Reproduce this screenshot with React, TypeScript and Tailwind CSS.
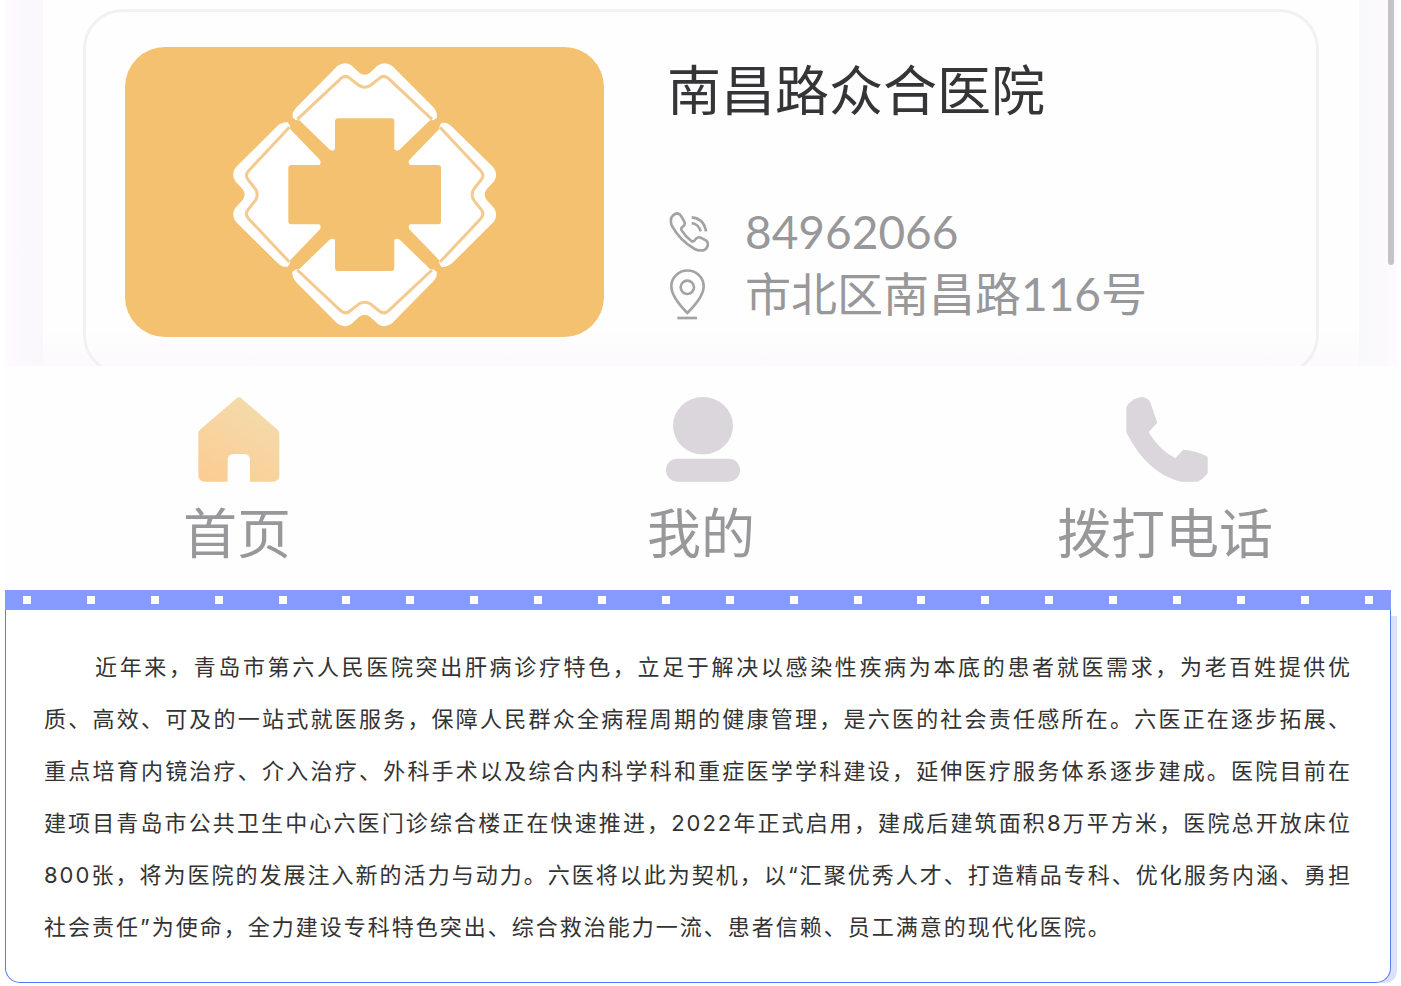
import type { ReactNode } from 'react'

const PETAL =
  'M218 190 Q222 180 230 172 L352 48 Q374 32 394 46 L418 68 Q434 80 450 68 L474 46 Q496 32 517 48 L640 172 Q652 185 651 203 Q642 212 630 211 L540 298 Q531 306 523 298 V214 Q523 205 514 205 H354 Q345 205 345 214 V298 Q337 306 328 298 L238 211 Q226 212 218 203 Z'
const PETAL_LINE = 'M232 208 L362 86 Q376 73 390 85 L418 107 Q434 116 450 107 L478 85 Q492 73 506 86 L636 208'

function Emblem() {
  return (
    <svg viewBox="0 -9 870 870" className="size-[290px]" aria-hidden="true">
      {[0, 90, 180, 270].map((angle) => (
        <g key={angle} transform={`rotate(${angle} 434 434)`}>
          <path d={PETAL} fill="#fff" />
          <path d={PETAL_LINE} fill="none" stroke="#f4ca90" strokeWidth="9" />
        </g>
      ))}
    </svg>
  )
}

function CallIcon() {
  return (
    <svg viewBox="21 36 126 126" className="size-[42px] shrink-0" fill="none" stroke="#a3a3a4" strokeWidth="8" strokeLinejoin="round" aria-hidden="true">
      <path d="M34 56 Q42 43 53 43 Q60 44 64 52 L73 68 Q77 77 69 82 Q61 87 65 94 Q76 112 94 126 Q101 130 106 121 Q113 112 122 116 L139 125 Q145 130 143 140 Q138 153 128 154 Q115 156 104 150 Q59 124 35 79 Q31 68 34 56 Z" />
      <path d="M95 55 Q132 58 138 97 M95 72 Q116 75 122 97" />
    </svg>
  )
}

function PinIcon() {
  return (
    <svg viewBox="21 210 126 159" className="h-[53px] w-[42px] shrink-0" fill="none" stroke="#a3a3a4" strokeWidth="8" strokeLinejoin="round" aria-hidden="true">
      <path d="M82 345 Q34 297 34 265 A48 47 0 0 1 131 265 Q131 297 82 345 Z" />
      <circle cx="82" cy="268" r="20" />
      <path d="M52 360 H111" />
    </svg>
  )
}

function HomeIcon() {
  return (
    <svg viewBox="66 51 270 255" className="h-[85px] w-[90px]" aria-hidden="true">
      <defs>
        <linearGradient id="home" x1="0.8" y1="0" x2="0.2" y2="1">
          <stop offset="0" stopColor="#f3dcae" />
          <stop offset="1" stopColor="#fbcd93" />
        </linearGradient>
      </defs>
      <path fill="url(#home)" d="M200 55 Q207 49 214 55 L323 149 Q328 154 328 160 V285 Q328 305 308 305 H240 V240 Q240 222 222 222 H191 Q173 222 173 240 V305 H105 Q85 305 85 285 V160 Q85 154 90 149 Z" />
    </svg>
  )
}

function UserIcon() {
  return (
    <svg viewBox="48 51 270 255" className="h-[85px] w-[90px]" fill="#dad6db" aria-hidden="true">
      <ellipse cx="189" cy="137" rx="90" ry="86" />
      <rect x="78" y="236" width="222" height="69" rx="34" />
    </svg>
  )
}

function PhoneIcon() {
  return (
    <svg viewBox="210 51 270 255" className="h-[85px] w-[90px]" fill="#dad6db" aria-hidden="true">
      <path d="M229 81 Q248 51 278 51 Q295 53 302 70 L322 128 L296 156 Q325 208 376 235 L400 209 Q440 212 473 230 V280 Q457 300 442 305 H392 Q290 280 229 157 Z" />
    </svg>
  )
}

function Tab({ icon, label }: { icon: ReactNode; label: string }) {
  return (
    <button type="button" className="flex flex-col items-center gap-[22px] text-[54px] leading-[60px] text-[#98989a]">
      {icon}
      <span>{label}</span>
    </button>
  )
}

function HospitalCard() {
  return (
    <article className="mx-10 mt-[9px] -mb-[9px] flex gap-[63px] rounded-[40px] border-[3px] border-[#f1f1f2] px-[39px] py-[35px]">
      <div className="flex w-[479px] shrink-0 items-center justify-center rounded-[40px] bg-[#f3c16f]">
        <Emblem />
      </div>
      <div className="flex flex-col justify-between text-[46px] leading-[62px] text-[#98989a]">
        <h2 className="text-[54px] leading-[88px] text-[#353537]">南昌路众合医院</h2>
        <div className="pb-3">
          <p className="flex items-center gap-9">
            <CallIcon />
            84962066
          </p>
          <p className="flex items-center gap-9">
            <PinIcon />
            市北区南昌路116号
          </p>
        </div>
      </div>
    </article>
  )
}

export default function App() {
  return (
    <main lang="zh-CN" className="pr-1 pb-[3px] pl-[5px] font-['Lato','Noto_Sans_CJK_SC',sans-serif]">
      <section className="relative flex overflow-hidden bg-[#fefefe]">
        <div className="w-[38px] shrink-0 bg-linear-to-r from-[#fefaff] to-[#f9f7fb]" />
        <div className="min-w-0 flex-1 bg-linear-to-b from-[#fefefe] from-90% to-[#fdf9fd]">
          <HospitalCard />
        </div>
        <div className="w-[38px] shrink-0 bg-linear-to-r from-[#f9f8fa] to-[#fefaff]" />
        <div className="absolute top-0 right-[3px] h-[265px] w-[6px] rounded-b-full bg-[#c4c4c6]" />
      </section>

      <nav className="grid grid-cols-3 bg-[#fefefe] pt-[31px] pb-[26px]">
        <Tab icon={<HomeIcon />} label="首页" />
        <Tab icon={<UserIcon />} label="我的" />
        <Tab icon={<PhoneIcon />} label="拨打电话" />
      </nav>

      <section className="mr-[6px]">
        <div className="flex h-5 items-center justify-between bg-[#879bff] px-[18px]">
          {Array.from({ length: 22 }, (_, i) => (
            <span key={i} className="size-2 bg-white" />
          ))}
        </div>
        <div className="rounded-b-[15px] border border-t-0 border-[#527bf5] bg-white px-[38px] pt-[31px] pb-[29px] shadow-[9px_3px_0_-3px_#dbe2ff]">
          <p className="text-justify indent-[51px] font-['Inter','Noto_Sans_CJK_SC',sans-serif] text-[22px] leading-[52px] tracking-[2px] text-[#333]">
            近年来，青岛市第六人民医院突出肝病诊疗特色，立足于解决以感染性疾病为本底的患者就医需求，为老百姓提供优质、高效、可及的一站式就医服务，保障人民群众全病程周期的健康管理，是六医的社会责任感所在。六医正在逐步拓展、重点培育内镜治疗、介入治疗、外科手术以及综合内科学科和重症医学学科建设，延伸医疗服务体系逐步建成。医院目前在建项目青岛市公共卫生中心六医门诊综合楼正在快速推进，2022年正式启用，建成后建筑面积8万平方米，医院总开放床位800张，将为医院的发展注入新的活力与动力。六医将以此为契机，以“汇聚优秀人才、打造精品专科、优化服务内涵、勇担社会责任”为使命，全力建设专科特色突出、综合救治能力一流、患者信赖、员工满意的现代化医院。
          </p>
        </div>
      </section>
    </main>
  )
}
